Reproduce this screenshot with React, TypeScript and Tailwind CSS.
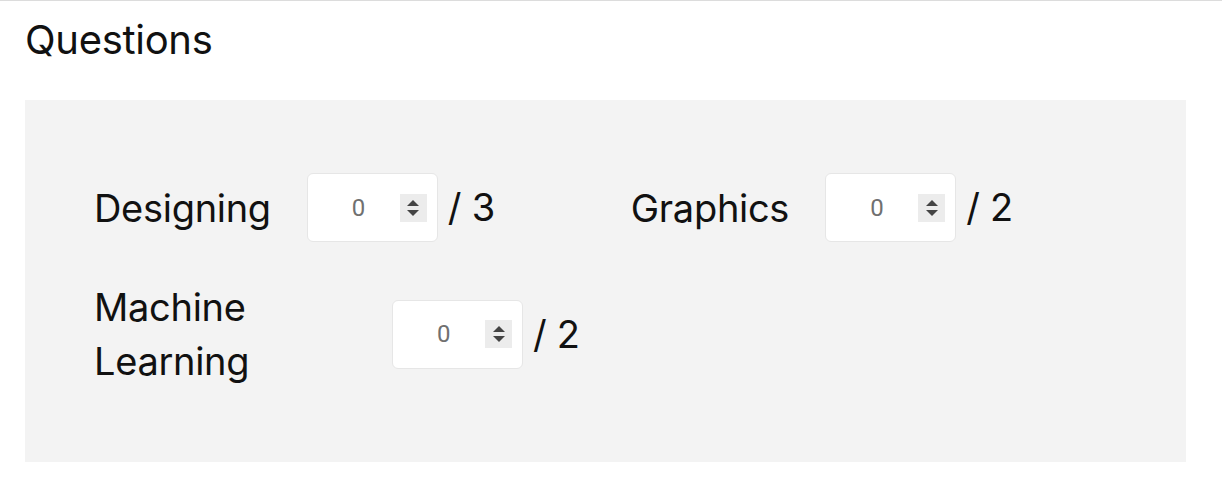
import React from "react";

function Spinner() {
  return (
    <div className="flex h-[28px] w-[27px] flex-col items-center justify-center gap-[4px] bg-[#ececec]">
      <svg width="12" height="6" viewBox="0 0 12 6"><path d="M6 0 L12 6 L0 6 Z" fill="#444" /></svg>
      <svg width="12" height="6" viewBox="0 0 12 6"><path d="M0 0 L12 0 L6 6 Z" fill="#444" /></svg>
    </div>
  );
}

function NumBox() {
  return (
    <div className="flex h-[69px] w-[131px] shrink-0 items-center rounded-[6px] border border-[#e6e6e6] bg-white pl-[44px] pr-[10px]">
      <span
        className="flex-1 text-left text-[24px] text-[#707070]"
        style={{ fontFamily: "Roboto, 'Liberation Sans', sans-serif" }}
      >
        0
      </span>
      <Spinner />
    </div>
  );
}

function Item({ label, max }: { label: string; max: number }) {
  return (
    <div className="flex items-center">
      <div className="leading-[54px]">{label}</div>
      <div className="ml-[36px]"><NumBox /></div>
      <div className="ml-[10px]">/ {max}</div>
    </div>
  );
}

export default function App() {
  return (
    <div
      className="min-h-[493px] border-t border-[#dcdcdc] bg-white text-[#111]"
      style={{ fontFamily: "Inter, 'Noto Sans', sans-serif" }}
    >
      <div className="pl-[25px] pr-[36px]">
        <h1 className="pt-[14px] text-[40px] leading-[50px] font-normal tracking-[-0.3px]">Questions</h1>
        <div className="mt-[35px] bg-[#f3f3f3] px-[69px] pt-[73px] pb-[74px] text-[38px] tracking-[-0.3px]">
          <div className="flex flex-wrap gap-x-[136px] gap-y-[38px]">
            <Item label="Designing" max={3} />
            <Item label="Graphics" max={2} />
            <div className="flex w-full items-center">
              <div className="w-[261px] leading-[54px]">Machine<br />Learning</div>
              <div className="ml-[37px]"><NumBox /></div>
              <div className="ml-[10px]">/ 2</div>
            </div>
          </div>
        </div>
      </div>
    </div>
  );
}
